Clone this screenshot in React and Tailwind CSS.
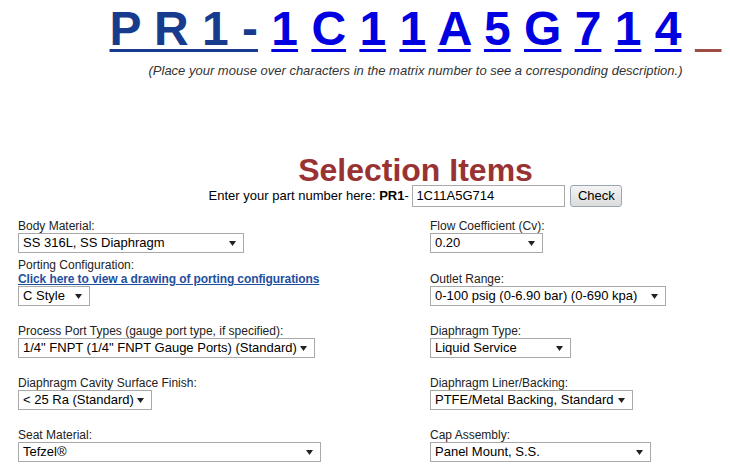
import React from 'react';

const FONT = { fontFamily: '"Liberation Sans", Arial, sans-serif' };

const matrix = ['1', 'C', '1', '1', 'A', '5', 'G', '7', '1', '4'];

const Select = ({ value, w }) => (
    <div className={`relative h-[20px] border border-[#a9a9a9] bg-white text-[13px] leading-[18px] text-black pl-[4px] ${w}`}>
        {value}
        <svg className="absolute right-[7px] top-[7px]" width="7" height="5" viewBox="0 0 7 5">
            <path d="M0 0 H7 L3.5 5 Z" fill="#222" />
        </svg>
    </div>
);

const Field = ({ label, value, w }) => (
    <div className="flex flex-col">
        <div className="text-[12px] leading-[14px] text-[#222]">{label}</div>
        <Select value={value} w={w} />
    </div>
);

const App = () => {
    return (
        <div className="w-[730px] h-[475px] overflow-hidden bg-white" style={FONT}>
            <div className="w-[831px] text-center">
                {/* matrix number */}
                <div className="mt-[5px] text-[48px] leading-[48px] font-bold whitespace-nowrap">
                    <span className="text-[#173c8e] underline decoration-[3px] underline-offset-[4px]">P R 1 -</span>
                    {matrix.map((c, i) => (
                        <React.Fragment key={i}>
                            {' '}
                            <a href="#" className="text-[#0000e0] underline decoration-[3px] underline-offset-[4px]">{c}</a>
                        </React.Fragment>
                    ))}
                    {' '}
                    <span className="underline decoration-[3px] underline-offset-[4px] decoration-[#9e4a45]">{'\u00a0\u00a0'}</span>
                </div>
                <p className="mt-[10px] text-[13px] leading-[15px] italic text-[#333]">
                    (Place your mouse over characters in the matrix number to see a corresponding description.)
                </p>

                <h2 className="mt-[77px] h-[30px] text-[32px] leading-[30px] font-bold text-[#993333]">Selection Items</h2>

                <div className="flex items-center justify-center h-[22px] text-[13px] text-black">
                    <span>Enter your part number here:&nbsp;</span>
                    <b>PR1</b>
                    <span>-&nbsp;</span>
                    <div className="w-[153px] h-[22px] border border-[#a9a9a9] text-left pl-[3px] leading-[20px]">1C11A5G714</div>
                    <button className="ml-[5px] w-[52px] h-[22px] rounded-[3px] border border-[#9aa6b8] bg-gradient-to-b from-[#f4f4f4] to-[#dcdcdc] text-[13px] leading-[20px]">Check</button>
                </div>
            </div>

            {/* selection form */}
            <div className="mt-[12px] pl-[18px] grid grid-cols-[412px_1fr]">
                <div className="flex flex-col">
                    <Field label="Body Material:" value="SS 316L, SS Diaphragm" w="w-[226px]" />
                    <div className="mt-[5px] text-[12px] leading-[14px] text-[#222]">Porting Configuration:</div>
                    <a href="#" className="text-[12px] leading-[14px] font-bold tracking-[-0.1px] text-[#1f4f9e] underline">
                        Click here to view a drawing of porting configurations
                    </a>
                    <Select value="C Style" w="w-[72px]" />
                    <div className="mt-[18px] flex flex-col gap-[18px]">
                        <Field label='Process Port Types (gauge port type, if specified):' value='1/4" FNPT (1/4" FNPT Gauge Ports) (Standard)' w="w-[297px]" />
                        <Field label="Diaphragm Cavity Surface Finish:" value="< 25 Ra (Standard)" w="w-[134px]" />
                        <Field label="Seat Material:" value="Tefzel®" w="w-[303px]" />
                    </div>
                </div>
                <div className="flex flex-col">
                    <Field label="Flow Coefficient (Cv):" value="0.20" w="w-[113px]" />
                    <div className="mt-[19px]">
                        <Field label="Outlet Range:" value="0-100 psig (0-6.90 bar) (0-690 kpa)" w="w-[236px]" />
                    </div>
                    <div className="mt-[18px] flex flex-col gap-[18px]">
                        <Field label="Diaphragm Type:" value="Liquid Service" w="w-[141px]" />
                        <Field label="Diaphragm Liner/Backing:" value="PTFE/Metal Backing, Standard" w="w-[203px]" />
                        <Field label="Cap Assembly:" value="Panel Mount, S.S." w="w-[221px]" />
                    </div>
                </div>
            </div>
        </div>
    );
};

export default App;
